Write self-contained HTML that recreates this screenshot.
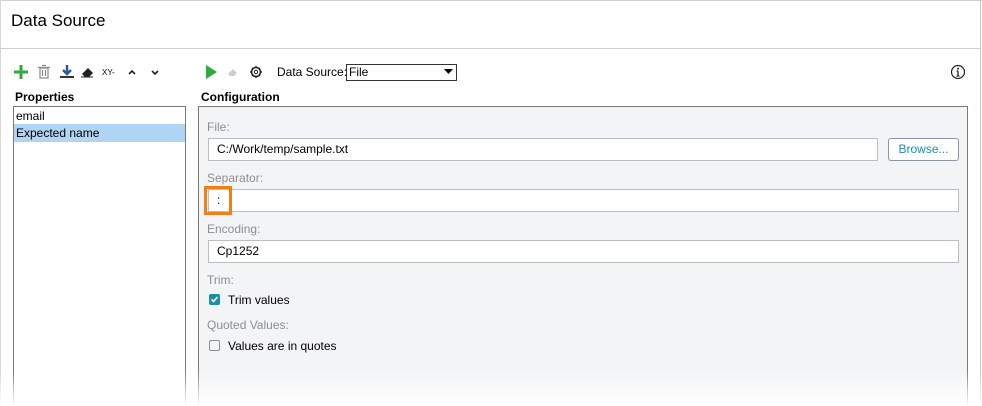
<!DOCTYPE html>
<html><head><style>
html,body{margin:0;width:982px;height:406px;overflow:hidden}
body{background:#fff;font-family:"Liberation Sans",sans-serif;font-size:12px;color:#000;position:relative}
.a{position:absolute}
.lbl{position:absolute;color:#8a8f96;font-size:12px}
.inp{position:absolute;background:#fff;border:1px solid #b9bec5;height:23px;line-height:21px;padding-left:8px;box-sizing:border-box}
</style></head><body>
<div class="a" style="right:1px;top:0;width:1px;height:406px;background:#c8c8c8"></div>
<div class="a" style="left:0;top:0;width:982px;height:1px;background:#d0d0d0"></div>
<div class="a" style="left:0;top:0;width:1px;height:406px;background:#d8d8d8"></div>
<div class="a" style="left:11px;top:11px;font-size:17px">Data Source</div>
<div class="a" style="left:0;top:48px;width:981px;height:1px;background:#cfcfcf"></div>
<svg class="a" style="left:14px;top:64px" width="150" height="16">
<path d="M7 1v14M0 8h14" stroke="#2faa3c" stroke-width="3"/>
<g fill="none" stroke="#888" stroke-width="1.2"><rect x="26" y="4" width="8" height="10"/><path d="M24 3.5h12M28 1.5h4M28.5 6v6M31.5 6v6"/></g>
<path d="M53 1v8M49 6l4 4 4-4" stroke="#2a5a9a" stroke-width="2.5" fill="none"/><rect x="46" y="12" width="14" height="2" fill="#333"/>
<path d="M68 10l6-6 5 5-4 4h-4z" fill="#222"/><path d="M67 13h12" stroke="#222"/>
<text x="88" y="11" font-size="8" font-family="Liberation Sans">XY-</text>
<path d="M115 10l3-3 3 3M138 7l3 3 3-3" stroke="#222" stroke-width="1.6" fill="none"/>
</svg>
<svg class="a" style="left:205px;top:64px" width="60" height="16">
<path d="M1 1l11 7-11 7z" fill="#2faa3c"/>
<path d="M23 10l5-5 4 4-3 3h-4z" fill="#ccc"/>
<circle cx="51" cy="8" r="4.5" fill="none" stroke="#222" stroke-width="1.5"/><circle cx="51" cy="8" r="1.7" fill="none" stroke="#222"/>
<path d="M51 2v2M51 12v2M45 8h2M55 8h2M47 4l1 1M54 11l1 1M47 12l1-1M54 5l1-1" stroke="#222" stroke-width="1.5"/>
</svg>
<div class="a" style="left:277px;top:65px">Data Source:</div>
<div class="a" style="left:346px;top:64px;width:111px;height:17px;border:1px solid #333;box-sizing:border-box;line-height:15px;padding-left:2px;background:#fff">File<svg style="position:absolute;right:3px;top:4px" width="9" height="6"><path d="M0 0h9L4.5 5z" fill="#000"/></svg></div>
<svg class="a" style="left:950px;top:64px" width="16" height="16"><circle cx="8" cy="8" r="6.5" fill="none" stroke="#222" stroke-width="1.2"/><path d="M8 7v5M6.5 12h3M6.5 7h1.5" stroke="#222" stroke-width="1.3"/><circle cx="8" cy="4.6" r="1" fill="#222"/></svg>
<div class="a" style="left:15px;top:90px;font-weight:bold">Properties</div>
<div class="a" style="left:201px;top:90px;font-weight:bold">Configuration</div>
<div class="a" style="left:13px;top:106px;width:173px;height:300px;border:1px solid #7a7a7a;border-bottom:none;box-sizing:border-box">
<div style="padding-left:2px;height:17px;line-height:19px">email</div>
<div style="padding-left:2px;height:18px;line-height:18px;background:#b0d4f4">Expected name</div>
</div>
<div class="a" style="left:198px;top:106px;width:770px;height:300px;border:1px solid #7a7a7a;border-bottom:none;box-sizing:border-box;background:#f3f4f6"></div>
<div class="lbl" style="left:207px;top:120px">File:</div>
<div class="inp" style="left:208px;top:138px;width:670px">C:/Work/temp/sample.txt</div>
<div class="a" style="left:888px;top:138px;width:71px;height:23px;border:1px solid #8a95a5;border-radius:3px;box-sizing:border-box;background:#fff;color:#1a8fb5;text-align:center;line-height:21px">Browse...</div>
<div class="lbl" style="left:207px;top:171px">Separator:</div>
<div class="inp" style="left:208px;top:189px;width:751px">:</div>
<div class="a" style="left:204px;top:186px;width:28px;height:29px;border:3px solid #f07f1a;box-sizing:border-box"></div>
<div class="lbl" style="left:207px;top:222px">Encoding:</div>
<div class="inp" style="left:208px;top:240px;width:751px">Cp1252</div>
<div class="lbl" style="left:207px;top:273px">Trim:</div>
<div class="a" style="left:209px;top:294px;width:11px;height:11px;background:#1c8fa6;border-radius:2px"><svg width="11" height="11" style="position:absolute"><path d="M2.5 5.5l2 2 4-4.5" stroke="#fff" stroke-width="1.6" fill="none"/></svg></div>
<div class="a" style="left:228px;top:293px">Trim values</div>
<div class="lbl" style="left:207px;top:318px">Quoted Values:</div>
<div class="a" style="left:209px;top:340px;width:11px;height:11px;border:1.5px solid #8a8f96;border-radius:2px;box-sizing:border-box"></div>
<div class="a" style="left:228px;top:339px">Values are in quotes</div>
<div class="a" style="left:0;top:370px;width:982px;height:36px;background:linear-gradient(rgba(255,255,255,0),#fff)"></div>
</body></html>
